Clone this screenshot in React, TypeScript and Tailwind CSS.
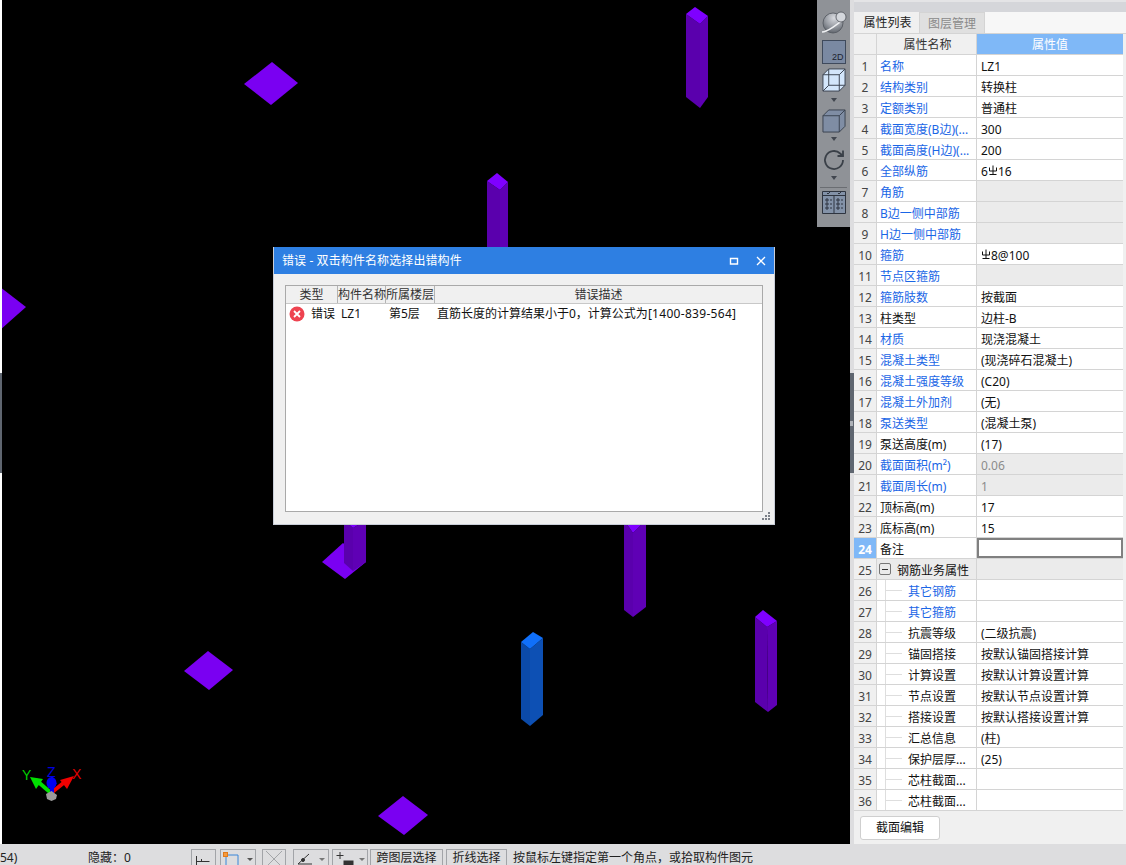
const rows: { name: string; value?: string; blue?: boolean; shaded?: boolean; muted?: boolean; tree?: boolean; rebar?: [string, string] }[] = [
  { name: "名称", value: "LZ1", blue: true },
  { name: "结构类别", value: "转换柱", blue: true },
  { name: "定额类别", value: "普通柱", blue: true },
  { name: "截面宽度(B边)(...", value: "300", blue: true },
  { name: "截面高度(H边)(...", value: "200", blue: true },
  { name: "全部纵筋", rebar: ["6", "16"], blue: true },
  { name: "角筋", blue: true, shaded: true },
  { name: "B边一侧中部筋", blue: true, shaded: true },
  { name: "H边一侧中部筋", blue: true, shaded: true },
  { name: "箍筋", rebar: ["", "8@100"], blue: true },
  { name: "节点区箍筋", blue: true, shaded: true },
  { name: "箍筋肢数", value: "按截面", blue: true },
  { name: "柱类型", value: "边柱-B" },
  { name: "材质", value: "现浇混凝土", blue: true },
  { name: "混凝土类型", value: "(现浇碎石混凝土)", blue: true },
  { name: "混凝土强度等级", value: "(C20)", blue: true },
  { name: "混凝土外加剂", value: "(无)", blue: true },
  { name: "泵送类型", value: "(混凝土泵)", blue: true },
  { name: "泵送高度(m)", value: "(17)" },
  { name: "截面面积(m²)", value: "0.06", blue: true, shaded: true, muted: true },
  { name: "截面周长(m)", value: "1", blue: true, shaded: true, muted: true },
  { name: "顶标高(m)", value: "17" },
  { name: "底标高(m)", value: "15" },
  { name: "备注" },
  { name: "钢筋业务属性", shaded: true },
  { name: "其它钢筋", blue: true, tree: true },
  { name: "其它箍筋", blue: true, tree: true },
  { name: "抗震等级", value: "(二级抗震)", tree: true },
  { name: "锚固搭接", value: "按默认锚固搭接计算", tree: true },
  { name: "计算设置", value: "按默认计算设置计算", tree: true },
  { name: "节点设置", value: "按默认节点设置计算", tree: true },
  { name: "搭接设置", value: "按默认搭接设置计算", tree: true },
  { name: "汇总信息", value: "(柱)", tree: true },
  { name: "保护层厚...", value: "(25)", tree: true },
  { name: "芯柱截面...", tree: true },
  { name: "芯柱截面...", tree: true },
];

const columns = [
  { top: "695,7 708,16 700,24 686,14", left: "686,14 700,24 700,108 686,97", right: "700,24 708,16 708,97 700,108" },
  { top: "497,173 508,182 500,190 487,181", left: "487,181 500,190 500,250 487,250", right: "500,190 508,182 508,250 500,250" },
  { top: "344,520 366,520 353,528", left: "344,520 353,528 353,571 344,563", right: "353,528 366,520 366,562 353,571" },
  { top: "624,520 646,520 633,533", left: "624,520 633,533 633,617 624,610", right: "633,533 646,520 646,607 633,617" },
  { top: "763,610 777,621 767,627 755,617", left: "755,617 767,627 768,712 755,702", right: "767,627 777,621 777,705 768,712" },
];

const diamonds = [
  "272,62 298,83 271,105 244,84",
  "0,287 26,307 0,330",
  "208,651 233,670 209,690 184,671",
  "403,796 428,815 404,835 378,816",
  "343,543 366,562 345,579 322,562",
];

function RebarMark() {
  return (
    <svg width="10" height="11" viewBox="0 0 10 11" className="-mt-[3px]" fill="none" stroke="#111" strokeWidth="1">
      <path d="M1.500 2.500v3.500h7V2.500M5 .5v8.500M1.500 9.500h7" />
    </svg>
  );
}

function Scene() {
  return (
    <svg width="848" height="844" viewBox="2 0 848 844" className="block">
      {diamonds.map((p) => (
        <polygon key={p} points={p} fill="#7a00f2" />
      ))}
      {columns.map((c) => (
        <g key={c.left}>
          <polygon points={c.left} fill="#5a00ad" />
          <polygon points={c.right} fill="#5f00b5" />
          <polygon points={c.top} fill="#7f00ff" />
        </g>
      ))}
      <polygon points="521,642 530,649 530,726 521,719" fill="#0b4aa8" />
      <polygon points="530,649 543,638 543,715 530,726" fill="#0d50b4" />
      <polygon points="533,632 543,638 530,649 521,642" fill="#1070fa" />
      {/* axes gizmo */}
      <path d="M51 793 36 780" stroke="#00e000" strokeWidth="4" />
      <polygon points="30,777 43,779 36,789" fill="#00e000" />
      <path d="M51 793 66 781" stroke="#f00000" strokeWidth="4" />
      <polygon points="74,776 60,780 67,789" fill="#f00000" />
      <path d="M52 793V780" stroke="#0000f0" strokeWidth="4" />
      <ellipse cx="51.500" cy="783" rx="5" ry="6" fill="#0000f0" />
      <polygon points="52,776 47,784 57,784" fill="#0000f0" />
      <polygon points="51.500,791 57,795 56,799 51.500,801 47,799 46,794" fill="#9a9a9a" />
      <text x="22" y="780" fontSize="14" fill="#00d000" fontFamily="Liberation Sans">Y</text>
      <text x="47" y="777" fontSize="14" fill="#0000e0" fontFamily="Liberation Sans">Z</text>
      <text x="72" y="779" fontSize="14" fill="#e00000" fontFamily="Liberation Sans">X</text>
    </svg>
  );
}

function Caret() {
  return (
    <svg width="8" height="4" viewBox="0 0 8 4" className="block shrink-0">
      <path d="M1 0h6L4 4z" fill="#41464f" />
    </svg>
  );
}

function ViewToolbar() {
  return (
    <div className="absolute left-[815px] top-0 flex h-[227px] w-[33px] flex-col items-center bg-[#8f9297]">
      <svg width="32" height="30" viewBox="0 0 32 30" className="mt-[8px]">
        <defs>
          <radialGradient id="globe" cx="0.55" cy="0.25" r="0.85">
            <stop offset="0" stopColor="#d8dadf" />
            <stop offset="0.5" stopColor="#9a9ea5" />
            <stop offset="1" stopColor="#4f545c" />
          </radialGradient>
        </defs>
        <circle cx="15" cy="15" r="10" fill="url(#globe)" stroke="#50555d" strokeWidth="0.800" />
        <path d="M4 24C9 24 21 16 27 9" stroke="#f0f1f3" strokeWidth="1.500" fill="none" />
        <circle cx="23" cy="9" r="5" fill="#d4d7dc" stroke="#4d5158" strokeWidth="0.800" />
      </svg>
      <div className="mt-[2px] flex h-[24px] w-[24px] items-end justify-end border border-[#3f4a5c] bg-[#7a89a2] pr-px text-[9px] leading-[11px] font-['Liberation_Sans',sans-serif] text-[#1d2430]">
        2D
      </div>
      <svg width="24" height="24" viewBox="0 0 25 25" className="mt-[4px] shrink-0" fill="none" stroke="#39424f" strokeWidth="1">
        <path d="M1 7 7 1h17v17l-6 6H1z" fill="#d3e6fb" />
        <path d="M1 7h17v17M18 7l6-6M7 1v17h17M7 18l-6 6" />
      </svg>
      <div className="mt-[6px]"><Caret /></div>
      <svg width="24" height="24" viewBox="0 0 25 25" className="mt-[7px] shrink-0" stroke="#39424f" strokeWidth="1">
        <path d="M1 7 7 1h17v17l-6 6H1z" fill="#7f8da4" />
        <path d="M1 7h17v17M18 7l6-6" fill="none" />
      </svg>
      <div className="mt-[4px]"><Caret /></div>
      <svg width="24" height="24" viewBox="0 0 24 24" className="mt-[7px] shrink-0" fill="none" stroke="#3a4048" strokeWidth="1.800">
        <path d="M21 12a9 9 0 1 1-2.800-6.500L21 8" />
        <path d="M21 2.500V8h-5.500" />
      </svg>
      <div className="mt-[4px]"><Caret /></div>
      <div className="mt-[7px] h-px w-[27px] shrink-0 bg-[#6a6d72]" />
      <svg width="24" height="23" viewBox="0 0 24 23" className="mt-[3px] shrink-0" fill="none" stroke="#2f3540" strokeWidth="1">
        <path d="M.5 .5h23v22H.500z" fill="#8392a8" />
        <path d="M.5 4.500h23M12 4.500v18M4 8h2v2H4zM4 12h2v2H4zM4 16h2v2H4zM15 8h2v2h-2zM15 12h2v2h-2zM15 16h2v2h-2zM8 9h2M8 13h2M8 17h2M19 9h2M19 13h2M19 17h2M5 2l1 1 2-2M16 2l1 1 2-2" />
      </svg>
    </div>
  );
}

function ErrorDialog() {
  return (
    <div className="absolute left-[271px] top-[247px] flex h-[278px] w-[502px] flex-col border border-t-0 border-[#c9ced8] bg-[#f0f0f0] text-[12px] text-[#111]">
      <div className="flex h-[27px] shrink-0 items-center bg-[#2e7fe2] pl-[8px] text-white">
        <span className="flex-1 tracking-[0.1px]">错误 - 双击构件名称选择出错构件</span>
        <svg width="10" height="10" viewBox="0 0 10 10" className="mr-[17px]" fill="none" stroke="#fff">
          <path d="M1.500 2.500h7v5.500h-7z" strokeWidth="1.400" />
        </svg>
        <svg width="10" height="10" viewBox="0 0 10 10" className="mr-[8px]" fill="none" stroke="#fff" strokeWidth="1.300">
          <path d="m1 1 8 8M9 1 1 9" />
        </svg>
      </div>
      <div className="ml-[11px] mr-[11px] mt-[11px] flex h-[229px] flex-col border border-[#a9a9a9] bg-white">
        <div className="flex h-[18px] shrink-0 border-b border-[#c8c8c8] bg-[#f0f0f0] leading-[18px] text-[#333]">
          <div className="w-[52px] border-r border-[#b4b4b4] text-center">类型</div>
          <div className="w-[48px] whitespace-nowrap border-r border-[#b4b4b4] text-center">构件名称</div>
          <div className="w-[49px] whitespace-nowrap border-r border-[#b4b4b4] text-center">所属楼层</div>
          <div className="flex-1 text-center">错误描述</div>
        </div>
        <div className="flex h-[20px] items-center whitespace-nowrap">
          <svg width="16" height="16" viewBox="0 0 16 16" className="ml-[3px] shrink-0">
            <circle cx="8" cy="8" r="7.500" fill="#ee4350" />
            <path d="m5 5 6 6M11 5l-6 6" stroke="#fff" strokeWidth="1.800" />
          </svg>
          <span className="ml-[6px] w-[30px]">错误</span>
          <span className="w-[48px]">LZ1</span>
          <span className="w-[48px]">第5层</span>
          <span>
            直筋长度的计算结果小于0，计算公式为<span className="tracking-[0.3px]">[1400-839-564]</span>
          </span>
        </div>
      </div>
      <div className="flex flex-1 items-end justify-end pb-[3px] pr-[3px]">
        <svg width="9" height="9" viewBox="0 0 9 9" fill="#7b8088">
          <path d="M6 0h2v2H6zM3 3h2v2H3zM6 3h2v2H6zM0 6h2v2H0zM3 6h2v2H3zM6 6h2v2H6z" />
        </svg>
      </div>
    </div>
  );
}

function PropertyRow({ row, index }: { row: (typeof rows)[number]; index: number }) {
  const selected = index === 24;
  const nameBg = index === 25 ? "bg-[#ebebeb]" : "bg-white";
  return (
    <div className="flex h-[21px] w-[269px] shrink-0 border-b border-[#d4d4d4]">
      <div
        className={
          selected
            ? "flex w-[23px] shrink-0 items-center justify-center border-r border-[#d4d4d4] bg-[#7fb8f7] pt-[3px] font-bold text-white"
            : "flex w-[23px] shrink-0 items-center justify-center border-r border-[#d4d4d4] bg-[#f0f0f0] pt-[3px] text-[#444]"
        }
      >
        {index}
      </div>
      <div className={`flex w-[100px] shrink-0 items-center whitespace-nowrap border-r border-[#d4d4d4] ${nameBg} ${row.blue ? "text-[#1a66e6]" : "text-[#111]"}`}>
        {row.tree && (
          <>
            <div className="ml-[8px] w-px self-stretch bg-[#dedede]" />
            <div className="h-px w-[16px] bg-[#dedede]" />
            <span className="ml-[6px] pt-[3px]">{row.name}</span>
          </>
        )}
        {index === 25 && (
          <>
            <div className="ml-[2px] flex h-[12px] w-[12px] items-center justify-center rounded-[2px] border border-[#777]">
              <div className="h-px w-[6px] bg-[#333]" />
            </div>
            <span className="ml-[6px] pt-[3px]">{row.name}</span>
          </>
        )}
        {!row.tree && index !== 25 && <span className="ml-[3px] pt-[3px]">{row.name}</span>}
      </div>
      <div
        className={`flex flex-1 items-center pl-[4px] pt-[3px] ${row.shaded ? "bg-[#ebebeb]" : "bg-white"} ${row.muted ? "text-[#8c8c8c]" : "text-[#111]"} ${selected ? "border-2 border-[#808080]" : ""}`}
      >
        {row.value}
        {row.rebar && (
          <>
            {row.rebar[0]}
            <RebarMark />
            {row.rebar[1]}
          </>
        )}
      </div>
    </div>
  );
}

function PropertyPanel() {
  return (
    <div className="flex w-[272px] shrink-0 flex-col bg-[#f0f0f0] text-[12px]">
      <div className="h-[12px] shrink-0 border-t-2 border-[#e4e4e6] bg-[#d5d6da]" />
      <div className="flex h-[22px] shrink-0 border-b border-[#d4d4d4] bg-[#f7f7f7]">
        <div className="flex w-[65px] items-center justify-center bg-[#f0f0f0] pl-[2px] pt-[1px] text-[#222]">属性列表</div>
        <div className="flex w-[66px] items-center justify-center border-x border-t border-[#d4d4d4] bg-[#e0e0e0] pt-[1px] text-[#8a8a8a]">图层管理</div>
      </div>
      <div className="flex h-[21px] w-[269px] shrink-0 border-b border-[#d4d4d4] bg-[#f0f0f0]">
        <div className="w-[23px] border-r border-[#d4d4d4]" />
        <div className="flex w-[100px] items-center justify-center border-r border-[#d4d4d4] pl-[2px] pt-[2px] text-[#333]">属性名称</div>
        <div className="flex flex-1 items-center justify-center bg-[#7fb8f7] pt-[2px] text-white">属性值</div>
      </div>
      {rows.map((row, i) => (
        <PropertyRow key={i} row={row} index={i + 1} />
      ))}
      <div className="flex flex-1 items-start pl-[6px] pt-[5px]">
        <button className="h-[24px] w-[80px] rounded-[3px] border border-[#cfcfcf] bg-white text-[#111]">截面编辑</button>
      </div>
    </div>
  );
}

function ToolButton({ className, children }: { className: string; children: React.ReactNode }) {
  return <div className={`flex h-[16px] shrink-0 items-start border border-b-0 border-[#a2a4a8] ${className}`}>{children}</div>;
}

function StatusBar() {
  return (
    <div className="flex h-[21px] shrink-0 items-start whitespace-nowrap bg-[#dddddf] text-[12px] text-[#222]">
      <span className="w-[88px] shrink-0 pt-[6px] leading-[15px]">54)</span>
      <span className="w-[103px] shrink-0 pt-[6px] leading-[15px]">隐藏：0</span>
      <div className="flex gap-[3px] pt-[5px]">
        <ToolButton className="w-[25px]">
          <svg width="23" height="15" viewBox="0 0 23 15" fill="none" stroke="#333">
            <path d="M4.500 6v9M4.500 11.500h13M9.500 9v3" />
          </svg>
        </ToolButton>
        <ToolButton className="ml-[1px] w-[36px] border-[#2f86e0]">
          <svg width="34" height="15" viewBox="0 0 34 15" fill="none">
            <path d="M5 5h12M5 5v10M17 5v10" stroke="#3a86d8" />
            <rect x="2.500" y="2.500" width="4" height="4" fill="#f79a3c" stroke="#e07a1a" />
            <path d="M26 8h6l-3 3z" fill="#555" />
          </svg>
        </ToolButton>
        <ToolButton className="ml-[3px] w-[24px]">
          <svg width="22" height="15" viewBox="0 0 22 15" fill="none" stroke="#a3a5a8">
            <path d="m3 1 16 16M19 1 3 17" />
          </svg>
        </ToolButton>
        <ToolButton className="ml-[4px] w-[36px]">
          <svg width="34" height="15" viewBox="0 0 34 15" fill="none" stroke="#333">
            <path d="M4 14 15 4M4 14h14" />
            <circle cx="9" cy="10" r="1.500" fill="#333" />
            <path d="M25 8h6l-3 3z" fill="#777" stroke="none" />
          </svg>
        </ToolButton>
        <ToolButton className="w-[36px]">
          <svg width="34" height="15" viewBox="0 0 34 15" fill="none" stroke="#333">
            <path d="M7 2v7M3.500 5.500h7" />
            <rect x="11" y="11" width="9" height="4" fill="#333" />
            <path d="M26 8h6l-3 3z" fill="#777" stroke="none" />
          </svg>
        </ToolButton>
        <ToolButton className="-ml-[1px] w-[73px] justify-center leading-[15px]">跨图层选择</ToolButton>
        <ToolButton className="w-[61px] justify-center leading-[15px]">折线选择</ToolButton>
      </div>
      <span className="ml-[6px] pt-[6px] leading-[15px]">按鼠标左键指定第一个角点，或拾取构件图元</span>
    </div>
  );
}

export default function App() {
  return (
    <div className="flex h-[865px] w-[1126px] flex-col overflow-hidden bg-white font-['Noto_Sans','Noto_Sans_CJK_SC',sans-serif]">
      <div className="flex min-h-0 flex-1">
        <div className="flex w-[2px] shrink-0 items-center bg-white">
          <div className="mt-[2px] h-[100px] w-[2px] bg-[#5f6670]" />
        </div>
        <div className="relative w-[848px] shrink-0 bg-black">
          <Scene />
          <ViewToolbar />
          <ErrorDialog />
        </div>
        <div className="flex w-[4px] shrink-0 items-center bg-[#dddddf]">
          <div className="mt-[2px] flex h-[100px] w-[4px] items-center bg-[#5f6670]">
            <div className="h-[5px] w-[3px] bg-[#aeb2b8]" />
          </div>
        </div>
        <PropertyPanel />
      </div>
      <StatusBar />
    </div>
  );
}
